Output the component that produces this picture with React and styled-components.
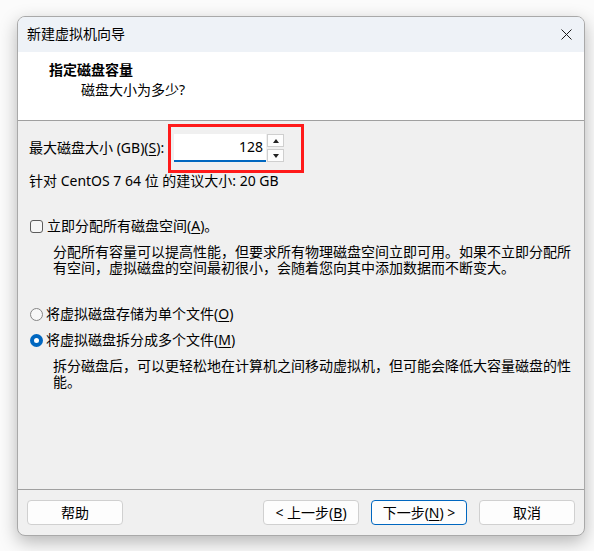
import React from "react";
import styled, { createGlobalStyle } from "styled-components";

const GlobalStyle = createGlobalStyle`
  html, body {
    margin: 0;
    padding: 0;
    background: #fbfbfb;
  }
  body {
    font-family: "Noto Sans", "Noto Sans CJK SC", sans-serif;
    font-size: 14px;
    color: #000;
  }
`;

const Page = styled.div`
  padding: 16px 0 0 17px;
  width: 594px;
  height: 551px;
  box-sizing: border-box;
`;

const Window = styled.div`
  width: 568px;
  height: 520px;
  box-sizing: border-box;
  border: 1px solid #a9a9a9;
  border-radius: 8px;
  overflow: hidden;
  display: flex;
  flex-direction: column;
  background: #f0f0f0;
  box-shadow: 0 6px 18px rgba(0, 0, 0, 0.28);
`;

const TitleBar = styled.div`
  height: 34px;
  flex: none;
  display: flex;
  align-items: center;
  justify-content: space-between;
  padding: 0 12px 1px 9px;
  background: #eef2f7;
  line-height: 20px;
`;

const CloseButton = styled.div`
  width: 12px;
  height: 12px;
  display: flex;
  align-items: center;
  justify-content: center;
`;

const Header = styled.div`
  height: 69px;
  flex: none;
  box-sizing: border-box;
  background: #fff;
  border-bottom: 1px solid #a0a0a0;
  padding: 8px 0 0 31px;
`;

const HeaderTitle = styled.div`
  font-weight: bold;
  font-size: 14px;
  line-height: 20px;
`;

const HeaderSub = styled.div`
  line-height: 20px;
  padding-left: 32px;
`;

const Body = styled.div`
  flex: 1;
  padding: 13px 0 0 11px;
  display: flex;
  flex-direction: column;
`;

const SizeRow = styled.div`
  display: flex;
  align-items: center;
  height: 28px;
`;

const Label = styled.div`
  width: 145px;
  line-height: 20px;
  flex: none;
`;

const Key = styled.span`
  text-decoration: underline;
  text-underline-offset: 2px;
`;

const SpinWrap = styled.div`
  position: relative;
  display: flex;
  height: 28px;
`;

const SpinInput = styled.div`
  width: 92px;
  height: 28px;
  box-sizing: border-box;
  background: #fff;
  border-bottom: 2px solid #0067c0;
  text-align: right;
  padding-right: 3px;
  line-height: 26px;
`;

const SpinButtons = styled.div`
  display: flex;
  flex-direction: column;
  gap: 2px;
  margin-left: 1px;
`;

const SpinButton = styled.div`
  width: 17px;
  height: 13px;
  box-sizing: border-box;
  border: 1px solid #cfcfcf;
  background: #fdfdfd;
  display: flex;
  align-items: center;
  justify-content: center;
`;

const Arrow = styled.div`
  width: 0;
  height: 0;
  border-left: 3px solid transparent;
  border-right: 3px solid transparent;
  ${(p) =>
    p.up ? "border-bottom: 4px solid #222;" : "border-top: 4px solid #222;"}
`;

const Highlight = styled.div`
  position: absolute;
  left: -6px;
  top: -10px;
  width: 136px;
  height: 49px;
  box-sizing: border-box;
  border: 3px solid #ff1a1a;
  pointer-events: none;
`;

const Line = styled.div`
  line-height: 20px;
  margin-top: ${(p) => p.mt || 0}px;
`;

const OptionRow = styled.div`
  display: flex;
  align-items: center;
  line-height: 20px;
  margin-top: ${(p) => p.mt || 0}px;
  padding-left: 1px;
`;

const CheckBox = styled.div`
  width: 13px;
  height: 13px;
  box-sizing: border-box;
  border: 1px solid #5c5c5c;
  border-radius: 3px;
  background: #f7f7f7;
  margin-right: 4px;
`;

const Radio = styled.div`
  width: 13px;
  height: 13px;
  box-sizing: border-box;
  border-radius: 50%;
  margin-right: 3px;
  ${(p) =>
    p.checked
      ? `border: 4px solid #0067c0; background: #fff;`
      : `border: 1px solid #858585; background: #f7f7f7;`}
`;

const Description = styled.div`
  width: 524px;
  margin-left: 24px;
  line-height: 16px;
  margin-top: ${(p) => p.mt || 0}px;
`;

const Footer = styled.div`
  height: 46px;
  flex: none;
  border-top: 1px solid #a0a0a0;
  box-sizing: border-box;
  display: flex;
  align-items: flex-start;
  padding: 10px 8px 0 9px;
`;

const Button = styled.div`
  width: 96px;
  height: 25px;
  box-sizing: border-box;
  background: #fdfdfd;
  border: 1px solid ${(p) => (p.primary ? "#0067c0" : "#d0d0d0")};
  border-radius: 4px;
  display: flex;
  align-items: center;
  justify-content: center;
  line-height: 20px;
  margin-left: ${(p) => p.ml || 0}px;
`;

export default function App() {
  return (
    <Page>
      <GlobalStyle />
      <Window>
        <TitleBar>
          <span>新建虚拟机向导</span>
          <CloseButton>
            <svg width="11" height="11" viewBox="0 0 11 11">
              <path d="M0.5 0.5 L10.5 10.5 M10.5 0.5 L0.5 10.5" stroke="#1a1a1a" strokeWidth="1" fill="none" />
            </svg>
          </CloseButton>
        </TitleBar>
        <Header>
          <HeaderTitle>指定磁盘容量</HeaderTitle>
          <HeaderSub>磁盘大小为多少?</HeaderSub>
        </Header>
        <Body>
          <SizeRow>
            <Label>
              最大磁盘大小 (GB)(<Key>S</Key>):
            </Label>
            <SpinWrap>
              <SpinInput>128</SpinInput>
              <SpinButtons>
                <SpinButton>
                  <Arrow up />
                </SpinButton>
                <SpinButton>
                  <Arrow />
                </SpinButton>
              </SpinButtons>
              <Highlight />
            </SpinWrap>
          </SizeRow>
          <Line mt={9}>针对 CentOS 7 64 位 的建议大小: 20 GB</Line>
          <OptionRow mt={25}>
            <CheckBox />
            <span>
              立即分配所有磁盘空间(<Key>A</Key>)。
            </span>
          </OptionRow>
          <Description mt={8}>
            分配所有容量可以提高性能，但要求所有物理磁盘空间立即可用。如果不立即分配所有空间，虚拟磁盘的空间最初很小，会随着您向其中添加数据而不断变大。
          </Description>
          <OptionRow mt={28}>
            <Radio />
            <span>
              将虚拟磁盘存储为单个文件(<Key>O</Key>)
            </span>
          </OptionRow>
          <OptionRow mt={6}>
            <Radio checked />
            <span>
              将虚拟磁盘拆分成多个文件(<Key>M</Key>)
            </span>
          </OptionRow>
          <Description mt={8}>
            拆分磁盘后，可以更轻松地在计算机之间移动虚拟机，但可能会降低大容量磁盘的性能。
          </Description>
        </Body>
        <Footer>
          <Button>帮助</Button>
          <Button ml={140}>
            &lt; 上一步(<Key>B</Key>)
          </Button>
          <Button primary ml={12}>
            下一步(<Key>N</Key>) &gt;
          </Button>
          <Button ml={12}>取消</Button>
        </Footer>
      </Window>
    </Page>
  );
}
